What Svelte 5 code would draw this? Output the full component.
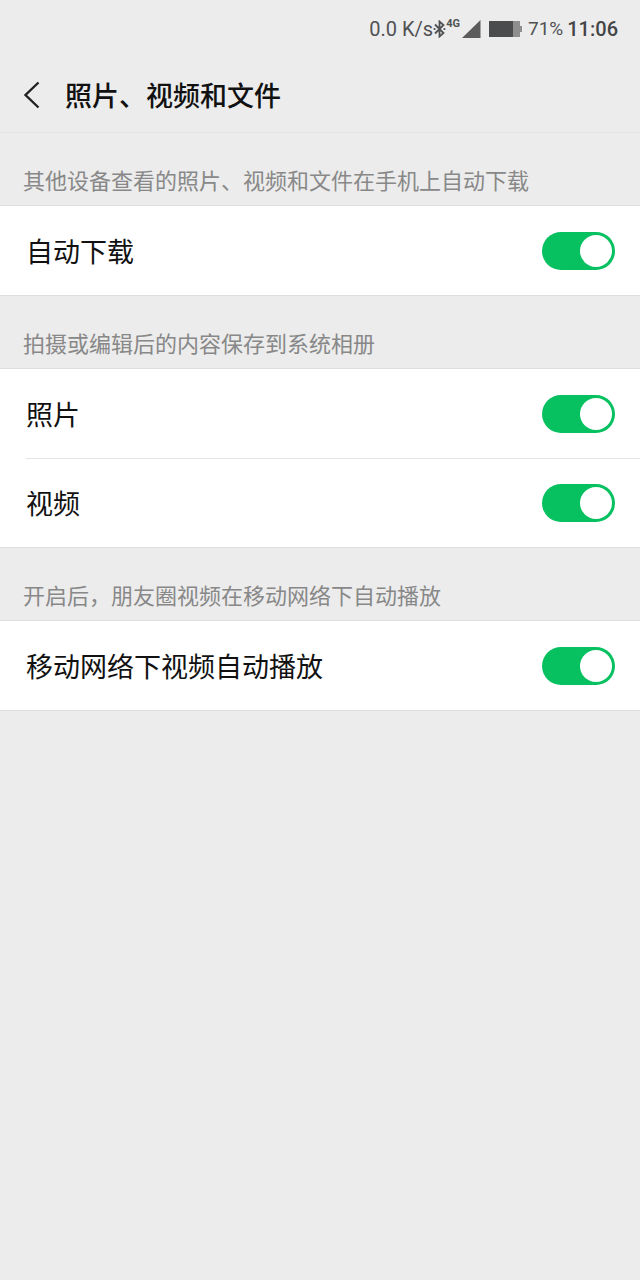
<script>
  let groups = $state([
    {
      hint: '其他设备查看的照片、视频和文件在手机上自动下载',
      items: [{ id: 'auto-download', label: '自动下载', on: true }],
    },
    {
      hint: '拍摄或编辑后的内容保存到系统相册',
      items: [
        { id: 'save-photo', label: '照片', on: true },
        { id: 'save-video', label: '视频', on: true },
      ],
    },
    {
      hint: '开启后，朋友圈视频在移动网络下自动播放',
      items: [{ id: 'auto-play', label: '移动网络下视频自动播放', on: true }],
    },
  ]);
</script>

<div class="status">
  <span>0.0 K/s</span>
  <svg class="bt" width="13" height="18" viewBox="0 0 13 18" aria-hidden="true">
    <path d="M2 4.5 L10.5 13 L6.5 16.5 V1.5 L10.5 5 L2 13.5" fill="none" stroke="currentColor" stroke-width="1.8" />
    <circle cx="1.6" cy="9" r="1.1" fill="currentColor" />
    <circle cx="11.4" cy="9" r="1.1" fill="currentColor" />
  </svg>
  <span class="net">4G</span>
  <svg class="signal" width="19" height="18" viewBox="0 0 19 18" aria-hidden="true">
    <path d="M18.5 0 V18 H0 Z" fill="#5c5c5d" />
  </svg>
  <svg class="battery" width="33" height="16" viewBox="0 0 33 16" aria-hidden="true">
    <path d="M0 0 H31 V5 H33 V11 H31 V16 H0 Z" fill="#8e8e8f" />
    <rect width="24" height="16" fill="#4b4c4e" />
  </svg>
  <span class="level">71%</span>
  <span class="time">11:06</span>
</div>

<header>
  <button class="back" aria-label="返回">
    <svg width="18" height="28" viewBox="0 0 18 28" aria-hidden="true">
      <path d="M15.5 1.5 L2.5 14 L15.5 26.5" fill="none" stroke="currentColor" stroke-width="2.4" />
    </svg>
  </button>
  <h1>照片、视频和文件</h1>
</header>

<main>
  {#each groups as group}
    <section>
      <p class="hint">{group.hint}</p>
      <div class="list">
        {#each group.items as item (item.id)}
          <div class="row">
            <label for={item.id}>{item.label}</label>
            <input id={item.id} class="switch" type="checkbox" role="switch" bind:checked={item.on} />
          </div>
        {/each}
      </div>
    </section>
  {/each}
</main>

<style>
  :global(body) {
    background: #ececec;
    color: #111;
    font-family: "Noto Sans CJK SC", sans-serif;
  }

  .status {
    display: flex;
    align-items: center;
    justify-content: flex-end;
    height: 57px;
    padding: 0 22px;
    box-sizing: border-box;
    font-family: Roboto, sans-serif;
    font-size: 20px;
    color: #505153;
  }
  .net {
    font-size: 11px;
    font-weight: 700;
    line-height: 12px;
    padding-bottom: 10px;
  }
  .signal { margin: 0 8px 0 2px; }
  .battery { margin-right: 6px; }
  .level { font-size: 19px; }
  .time {
    margin-left: 4px;
    font-weight: 500;
    color: #444547;
  }

  header {
    display: flex;
    align-items: center;
    height: 76px;
    padding-left: 23px;
    box-sizing: border-box;
    border-bottom: 1px solid #e4e4e4;
  }
  .back {
    display: flex;
    margin: 0 24px 0 0;
    padding: 0;
    border: 0;
    background: none;
    color: #222;
    cursor: pointer;
  }
  h1 {
    margin: 0;
    font-size: 27px;
    line-height: 40px;
    font-weight: 500;
  }

  .hint {
    margin: 0;
    padding: 31px 23px 11px;
    font-size: 22px;
    line-height: 30px;
    color: #888;
  }

  .list {
    background: #fff;
    border-top: 1px solid #dedede;
    border-bottom: 1px solid #dedede;
  }
  .row {
    display: flex;
    align-items: center;
    height: 89px;
    margin-left: 26px;
    padding-right: 25px;
    box-sizing: border-box;
  }
  .row + .row { border-top: 1px solid #e5e5e5; }
  .row label {
    flex: 1;
    font-size: 27px;
    line-height: 40px;
  }

  .switch {
    appearance: none;
    display: flex;
    width: 73px;
    height: 38px;
    margin: 0;
    padding: 3px;
    box-sizing: border-box;
    border-radius: 19px;
    background: #d5d5d5;
    cursor: pointer;
  }
  .switch::before {
    content: '';
    width: 32px;
    height: 32px;
    border-radius: 50%;
    background: #fff;
  }
  .switch:checked {
    justify-content: flex-end;
    background: #07c160;
  }
</style>
